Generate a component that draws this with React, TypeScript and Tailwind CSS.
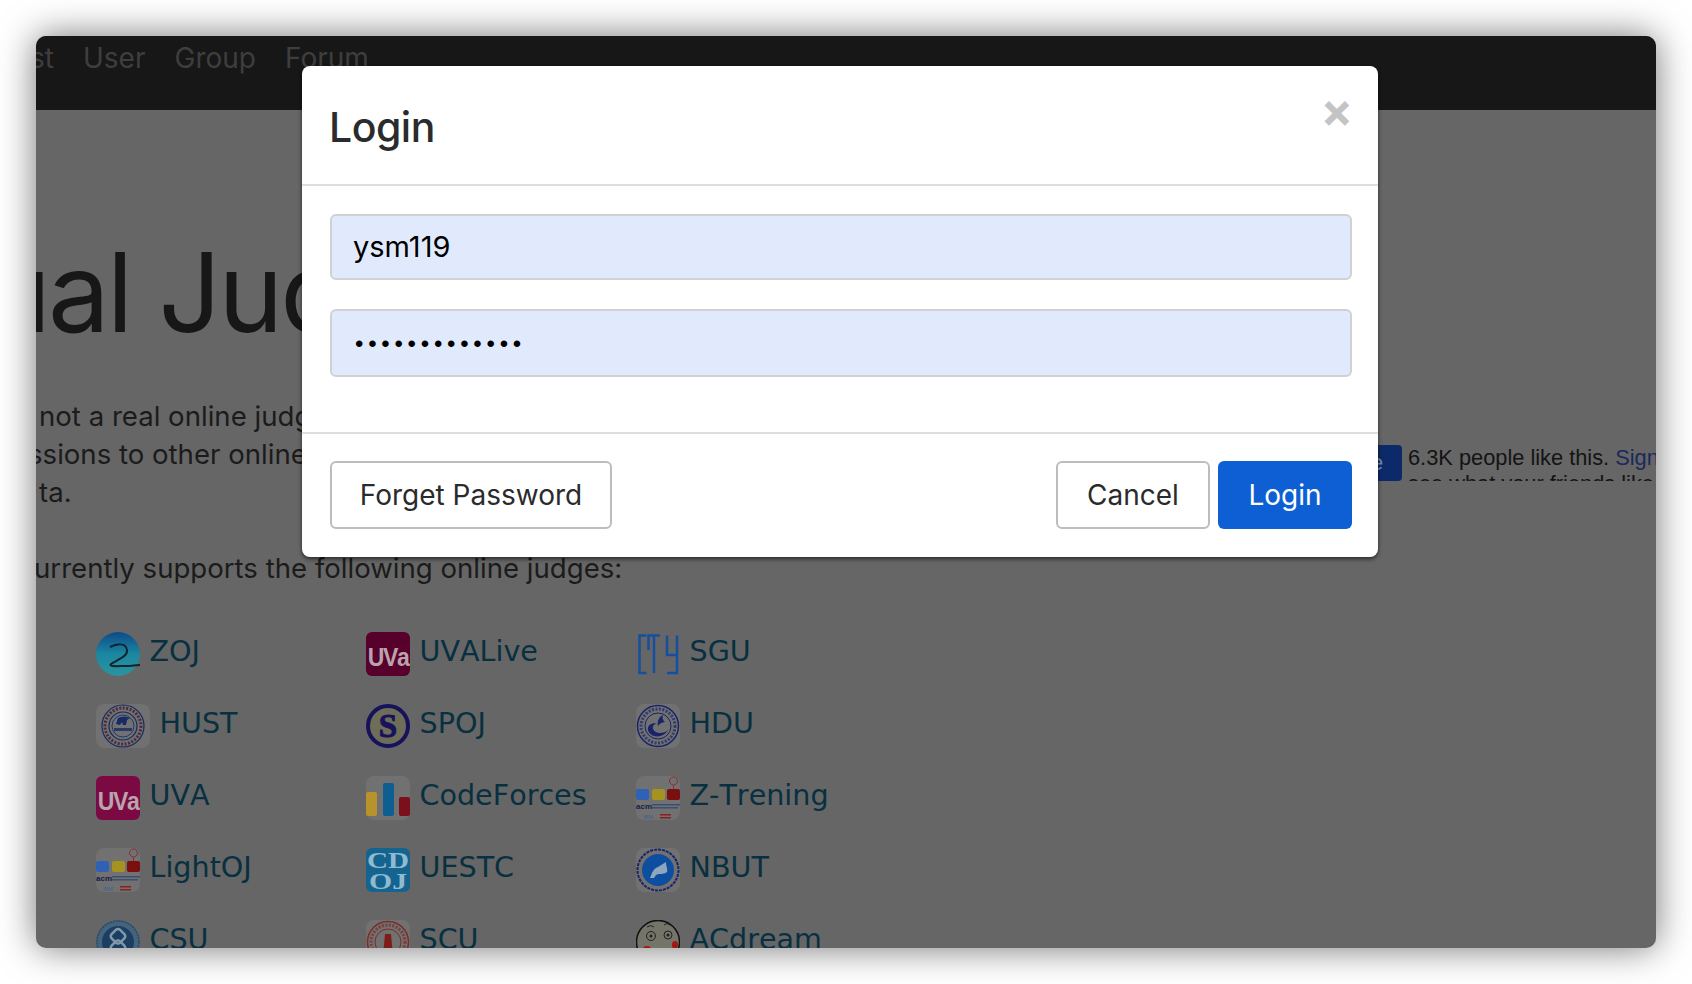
import type { ReactNode } from "react";

function Seal({ color, children }: { color: string; children?: ReactNode }) {
  return (
    <svg viewBox="0 0 44 44" className="w-11 h-11">
      <rect width="44" height="44" rx="8" fill="#717171" />
      <circle cx="22" cy="22" r="20.5" fill="none" stroke={color} strokeWidth="1.5" />
      <circle cx="22" cy="22" r="17" fill="none" stroke={color} strokeWidth="3" strokeDasharray="2 1.5" opacity="0.7" />
      <circle cx="22" cy="22" r="13" fill="none" stroke={color} strokeWidth="1" />
      {children}
    </svg>
  );
}

function Uva({ className }: { className: string }) {
  return (
    <div className={`w-11 h-11 rounded-[6px] flex items-end justify-center overflow-hidden pb-[6px] ${className}`}>
      <span className="font-['Liberation_Sans',sans-serif] font-bold text-[25px] leading-[26px] tracking-[-1.5px] text-[#b9a3ad] scale-x-[0.92]">UVa</span>
    </div>
  );
}

function Acm() {
  return (
    <svg viewBox="0 0 44 44" className="w-11 h-11">
      <rect width="44" height="44" rx="8" fill="#717171" />
      <path d="M17 12q5-5 10 0" fill="none" stroke="#8a8040" strokeWidth="1" strokeDasharray="1 1" />
      <rect x="0" y="13" width="13" height="11" rx="2" fill="#2f62b4" />
      <rect x="16" y="13" width="13" height="11" rx="2" fill="#a69220" />
      <rect x="31" y="13" width="13" height="11" rx="2" fill="#7a0f10" />
      <path d="M37.5 13v-4M37.5 9a4 4 0 1 0-.1 0" fill="none" stroke="#8a3030" strokeWidth="1" />
      <text x="0" y="33" fontSize="8" fontWeight="700" fill="#15204a" fontFamily="Liberation Sans, sans-serif">acm</text>
      <rect x="16" y="28" width="28" height="1.5" fill="#3a4f70" />
      <rect x="16" y="31" width="26" height="1.5" fill="#3a4f70" />
      <text x="7" y="43" fontSize="5.5" fill="#3b5f9c" fontFamily="Liberation Sans, sans-serif">IBM</text>
      <rect x="24" y="38" width="11" height="1.5" fill="#8a2020" />
      <rect x="24" y="41" width="11" height="1.5" fill="#8a2020" />
    </svg>
  );
}

const icons: Record<string, ReactNode> = {
  ZOJ: (
    <svg viewBox="0 0 44 44" className="w-11 h-11">
      <defs>
        <linearGradient id="zoj" x1="0" y1="0" x2="0" y2="1">
          <stop offset="0" stopColor="#0d4a8a" />
          <stop offset="0.5" stopColor="#1b87a0" />
          <stop offset="1" stopColor="#2b94a0" />
        </linearGradient>
      </defs>
      <circle cx="22" cy="22" r="22" fill="url(#zoj)" />
      <path d="M14 15C20 12 30 10 31 18 32 25 20 28 15 32 12 35 22 34 30 34 35 34 40 33 44 33" fill="none" stroke="#10242e" strokeWidth="2" />
    </svg>
  ),
  HUST: (
    <svg viewBox="0 0 54 44" className="w-[54px] h-11">
      <rect width="54" height="44" rx="8" fill="#717171" />
      <circle cx="27" cy="22" r="21" fill="none" stroke="#152a66" strokeWidth="1.2" />
      <circle cx="27" cy="22" r="18" fill="none" stroke="#4f2a3a" strokeWidth="3" strokeDasharray="2 1.5" />
      <circle cx="27" cy="22" r="14" fill="none" stroke="#152a66" strokeWidth="1.2" />
      <circle cx="27" cy="22" r="11" fill="none" stroke="#152a66" strokeWidth="0.8" />
      <path d="M20 20l2-6c4-2 8-2 12 0l-3 2-1 5h-3l-1-3-2 3z" fill="#152a66" />
      <rect x="18" y="24" width="18" height="3" fill="#2a3a66" />
    </svg>
  ),
  UVA: <Uva className="bg-[#7c0a42]" />,
  LightOJ: <Acm />,
  CSU: (
    <svg viewBox="0 0 44 44" className="w-11 h-11">
      <circle cx="22" cy="22" r="22" fill="#46637c" />
      <circle cx="22" cy="22" r="21" fill="none" stroke="#2a4a68" strokeWidth="1.5" strokeDasharray="2 1" />
      <circle cx="22" cy="22" r="16" fill="#1b3e63" />
      <g fill="none" stroke="#8298aa" strokeWidth="2.5" transform="rotate(45 22 22)">
        <rect x="12" y="12" width="12" height="12" rx="3" />
        <rect x="20" y="20" width="12" height="12" rx="3" />
      </g>
    </svg>
  ),
  UVALive: <Uva className="bg-[#57002b]" />,
  SPOJ: (
    <svg viewBox="0 0 44 44" className="w-11 h-11">
      <circle cx="22" cy="22" r="20" fill="#6d6d58" stroke="#17125c" strokeWidth="4" />
      <text x="22" y="33" textAnchor="middle" fontSize="33" fontWeight="700" fontFamily="Liberation Serif, serif" fill="#17125c" stroke="#17125c" strokeWidth="1">S</text>
    </svg>
  ),
  CodeForces: (
    <svg viewBox="0 0 44 44" className="w-11 h-11">
      <rect width="44" height="44" rx="8" fill="#717171" />
      <rect x="0" y="16" width="11" height="24" rx="2" fill="#b8932c" />
      <rect x="17" y="7" width="11" height="33" rx="2" fill="#0f5e92" />
      <rect x="33" y="21" width="11" height="19" rx="2" fill="#7b0f1c" />
    </svg>
  ),
  UESTC: (
    <svg viewBox="0 0 44 44" className="w-11 h-11">
      <rect width="44" height="44" rx="6" fill="#15638f" />
      <text x="1" y="20" fontSize="24" textLength="42" lengthAdjust="spacingAndGlyphs" fontWeight="700" fontFamily="Liberation Serif, serif" fill="#8fbbd1">CD</text>
      <text x="3" y="41" fontSize="24" textLength="38" lengthAdjust="spacingAndGlyphs" fontWeight="700" fontFamily="Liberation Serif, serif" fill="#8fbbd1">OJ</text>
    </svg>
  ),
  SCU: (
    <Seal color="#7e2a25">
      <path d="M19 14h6l2 22h-10z" fill="#7e1d18" />
    </Seal>
  ),
  SGU: (
    <svg viewBox="0 0 44 44" className="w-11 h-11" fill="none" stroke="#14509f" strokeWidth="2.5">
      <path d="M10.5 3.5H3.5v37.5h7" />
      <path d="M12.5 18V3.5H24M18 3.5V41" />
      <path d="M31 3.5V23H41M41 3.5V41H31" />
    </svg>
  ),
  HDU: (
    <Seal color="#18236a">
      <path d="M12 26c2 8 15 9 20 0-4 4-13 4-15-1-1-3 2-6 5-5-5-2-11 1-10 6z" fill="#18236a" />
      <path d="M22 22c-1-5 1-9 5-11-1 4 0 5 2 7-2 0-5 1-7 4z" fill="#18236a" />
    </Seal>
  ),
  "Z-Trening": <Acm />,
  NBUT: (
    <svg viewBox="0 0 44 44" className="w-11 h-11">
      <rect width="44" height="44" rx="8" fill="#717171" />
      <circle cx="22" cy="22" r="20.5" fill="none" stroke="#18236a" strokeWidth="2" strokeDasharray="3 1" />
      <circle cx="22" cy="22" r="16" fill="#0e4ea0" />
      <path d="M14 30c2-5 3-9 8-11l8-5c0 5 2 7 1 10-4 3-8 1-11 3l-2 3z" fill="#8fa6bc" />
    </svg>
  ),
  ACdream: (
    <svg viewBox="0 0 44 44" className="w-11 h-11">
      <circle cx="22" cy="22" r="21.5" fill="#747468" stroke="#111" strokeWidth="1.5" />
      <circle cx="15" cy="16" r="4.5" fill="none" stroke="#222" strokeWidth="1" />
      <circle cx="32" cy="15" r="4" fill="none" stroke="#222" strokeWidth="1" />
      <circle cx="15" cy="16" r="1.5" fill="#222" />
      <circle cx="32" cy="15" r="1.5" fill="#222" />
      <path d="M11 7q4-3 7 0M28 5q3-3 6 0" fill="none" stroke="#222" strokeWidth="1" />
      <ellipse cx="11" cy="29" rx="4" ry="3" fill="#a51515" />
      <ellipse cx="39" cy="25" rx="3" ry="4" fill="#a51515" />
    </svg>
  ),
};

const judges = [
  "ZOJ", "UVALive", "SGU",
  "HUST", "SPOJ", "HDU",
  "UVA", "CodeForces", "Z-Trening",
  "LightOJ", "UESTC", "NBUT",
  "CSU", "SCU", "ACdream",
];

export default function App() {
  return (
    <div className="w-[1692px] h-[984px] bg-white p-9 overflow-hidden">
      <div className="relative w-[1620px] h-[912px] rounded-[10px] overflow-hidden bg-[#666666] shadow-[0_0_36px_rgba(0,0,0,0.55)]">
        <div className="h-[74px] bg-[#171717] flex items-start gap-[29px] -ml-[36px] pt-[1px] font-['Inter',sans-serif] text-[28px] leading-[42px] text-[#3e3e3e]">
          <span className="w-[54px] text-right">st</span>
          <span>User</span>
          <span>Group</span>
          <span>Forum</span>
        </div>

        <div className="flex">
          <div className="w-[1370px] shrink-0 font-['Inter',sans-serif] text-[#1b1b1b]">
            <h1 className="-ml-[50px] mt-[127px] font-['Inter',sans-serif] font-normal text-[110px] leading-[110px] tracking-[-3px] whitespace-nowrap text-[#171717]">ual Judge</h1>
            <div className="mt-[50px] text-[27.6px] leading-[38px] whitespace-nowrap">
              <p className="ml-[3px]">not a real online judge</p>
              <p className="-ml-[8px]">ssions to other online judges</p>
              <p className="ml-[3px]">ta.</p>
              <p className="mt-[38px] -ml-[2px]">urrently supports the following online judges:</p>
            </div>
            <div className="mt-[45px] ml-[60px] grid grid-cols-[270px_270px_270px] auto-rows-[72px] font-['DejaVu_Sans',sans-serif] [font-kerning:none] text-[28.6px] leading-[44px] text-[#083040]">
              {judges.map((name) => (
                <div key={name} className="flex items-start gap-[9.5px]">
                  {icons[name]}
                  <span className="-mt-[3px]">{name}</span>
                </div>
              ))}
            </div>
          </div>

          <div className="pt-[335px] -ml-[66px] flex gap-[6px] whitespace-nowrap font-['Liberation_Sans',sans-serif] text-[21.8px] leading-[26px] text-[#141414]">
            <div className="w-[62px] h-9 rounded-[4px] bg-[#0c2a6a] flex items-center justify-end pr-[19px] text-[#7a8aa8]">e</div>
            <div className="h-9 overflow-hidden">
              <p>6.3K people like this. <span className="text-[#1a2a5c]">Sign Up to</span></p>
              <p>see what your friends like.</p>
            </div>
          </div>
        </div>

        {/* modal */}
        <div className="absolute left-[266px] top-[30px] w-[1076px] h-[491px] rounded-[8px] bg-white shadow-[0_2px_4px_rgba(0,0,0,0.6)] flex flex-col font-['Inter',sans-serif] text-[#292b2c]">
          <div className="h-[120px] shrink-0 border-b-2 border-[#dddddd] flex items-start justify-between pl-[27px] pr-[25px]">
            <h2 className="mt-[36px] text-[41px] leading-[50px] tracking-[-0.5px] font-medium">Login</h2>
            <span className="mt-[16px] text-[48px] leading-[56px] font-bold text-[#c4c4c4]">×</span>
          </div>
          <div className="h-[248px] shrink-0 border-b-2 border-[#dddddd] px-[28px] pt-[28px] flex flex-col gap-[29px]">
            <input readOnly value="ysm119" className="h-[66px] w-[1022px] rounded-[6px] border-2 border-[#cfd1d3] bg-[#e1eafd] px-[21px] pb-[2px] text-[29px] text-black outline-none" />
            <input readOnly type="password" value="ysm119ysm1191" className="h-[68px] w-[1022px] rounded-[6px] border-2 border-[#cfd1d3] bg-[#e1eafd] pl-[23px] pr-[21px] pt-[2px] font-['Liberation_Sans',sans-serif] text-[24px] tracking-[4.75px] text-black outline-none" />
          </div>
          <div className="flex items-start pt-[27px] pl-[28px] pr-[26px] text-[28px]">
            <button className="h-[68px] w-[282px] rounded-[6px] border-2 border-[#bdbdbd] bg-white">Forget Password</button>
            <button className="ml-auto h-[68px] w-[154px] rounded-[6px] border-2 border-[#bdbdbd] bg-white">Cancel</button>
            <button className="ml-[8px] h-[68px] w-[134px] rounded-[6px] bg-[#0d5fd3] text-white">Login</button>
          </div>
        </div>
      </div>
    </div>
  );
}
